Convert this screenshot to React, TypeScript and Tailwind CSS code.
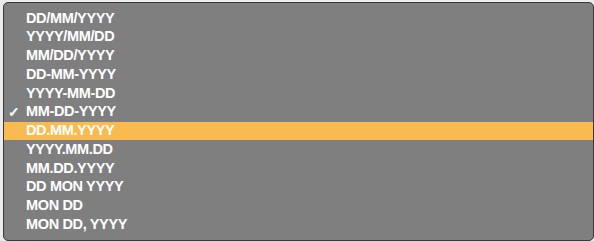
const formats = [
  "DD/MM/YYYY",
  "YYYY/MM/DD",
  "MM/DD/YYYY",
  "DD-MM-YYYY",
  "YYYY-MM-DD",
  "MM-DD-YYYY",
  "DD.MM.YYYY",
  "YYYY.MM.DD",
  "MM.DD.YYYY",
  "DD MON YYYY",
  "MON DD",
  "MON DD, YYYY",
];

const selected = "MM-DD-YYYY";
const hovered = "DD.MM.YYYY";

function App() {
  return (
    <div className="h-[241px] w-[594px] overflow-hidden bg-[#ececec] pl-[3px] pt-[2px]">
      <div
        className="h-[239px] w-[591px] rounded-[5px] border border-[#3a3a3a] bg-[#7f7f7f] pt-[6px]"
        style={{ fontFamily: "'Liberation Sans', Arial, sans-serif" }}
      >
        <ul className="flex flex-col">
          {formats.map((f) => (
            <li
              key={f}
              className={`flex h-[18.75px] items-center text-[14.5px] font-bold tracking-[-0.35px] text-white ${
                f === hovered ? "bg-[#f9bb50]" : ""
              }`}
            >
              <span className="flex w-[22px] justify-end pr-[6px] text-[14px] font-bold">
                {f === selected ? "✓" : ""}
              </span>
              <span>{f}</span>
            </li>
          ))}
        </ul>
      </div>
    </div>
  );
}

export default App;
